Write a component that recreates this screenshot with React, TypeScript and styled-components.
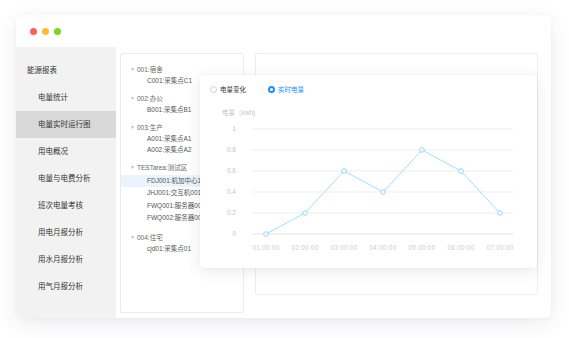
import React, { useState } from 'react';
import styled, { createGlobalStyle } from 'styled-components';

const GlobalStyle = createGlobalStyle`
  html, body {
    margin: 0;
    padding: 0;
    background: #ffffff;
    font-family: "Liberation Sans", "Noto Sans CJK SC", sans-serif;
  }
`;

const Page = styled.div`
  width: 569px;
  height: 338px;
  padding: 15px 0 0 16px;
  box-sizing: border-box;
`;

const Window = styled.div`
  width: 535px;
  height: 303px;
  border-radius: 6px;
  background: #ffffff;
  box-shadow: 0 6px 22px rgba(60, 50, 90, 0.09), 0 1px 4px rgba(0, 0, 0, 0.04);
  display: flex;
  flex-direction: column;
  overflow: hidden;
`;

const TitleBar = styled.div`
  height: 32px;
  display: flex;
  align-items: center;
  gap: 5px;
  padding-left: 14px;
  flex-shrink: 0;
`;

const Dot = styled.span<{ color: string }>`
  width: 7px;
  height: 7px;
  border-radius: 50%;
  background: ${(p) => p.color};
`;

const Body = styled.div`
  flex: 1;
  display: flex;
  min-height: 0;
`;

const Sidebar = styled.div`
  width: 100px;
  background: #f2f2f2;
  padding-top: 10px;
  box-sizing: border-box;
`;

const NavItem = styled.div<{ $active?: boolean; $root?: boolean }>`
  height: 27px;
  line-height: 27px;
  padding-left: ${(p) => (p.$root ? '11px' : '22px')};
  font-size: 7.5px;
  color: #333;
  background: ${(p) => (p.$active ? '#d9d9d9' : 'transparent')};
  white-space: nowrap;
`;

const Main = styled.div`
  position: relative;
  flex: 1;
  display: flex;
  align-items: flex-start;
  gap: 11px;
  padding: 6px 13px 5px 4px;
`;

const TreePanel = styled.div`
  width: 124px;
  height: 260px;
  box-sizing: border-box;
  border: 1px solid #ebebeb;
  border-radius: 2px;
  padding-top: 10px;
  overflow: hidden;
`;

const Group = styled.div`
  margin-bottom: 7px;
`;

const GroupHead = styled.div`
  height: 11px;
  line-height: 11px;
  display: flex;
  align-items: center;
  padding-left: 9px;
  font-size: 6.5px;
  color: #666;
  white-space: nowrap;
`;

const Caret = styled.span`
  font-size: 5px;
  color: #bbb;
  width: 7px;
`;

const Leaf = styled.div<{ $selected?: boolean; $tall?: boolean }>`
  height: ${(p) => (p.$tall ? '12.4px' : '11px')};
  line-height: ${(p) => (p.$tall ? '12.4px' : '11px')};
  padding-left: 26px;
  font-size: 6.5px;
  color: #555;
  white-space: nowrap;
  background: ${(p) => (p.$selected ? '#eaf3fe' : 'transparent')};
`;

const Backdrop = styled.div`
  flex: 1;
  height: 242px;
  box-sizing: border-box;
  border: 1px solid #eeeeee;
  border-radius: 2px;
`;

const ChartCard = styled.div`
  position: absolute;
  left: 84px;
  top: 28px;
  width: 337px;
  height: 193px;
  background: #ffffff;
  border-radius: 4px;
  box-shadow: 0 3px 14px rgba(70, 60, 100, 0.12), 0 0 2px rgba(0, 0, 0, 0.04);
`;

const RadioRow = styled.div`
  display: flex;
  align-items: center;
  height: 28px;
  padding-left: 10px;
  gap: 22px;
`;

const RadioLabel = styled.label<{ $checked?: boolean }>`
  display: flex;
  align-items: center;
  gap: 3px;
  font-size: 6.5px;
  color: ${(p) => (p.$checked ? '#1890ff' : '#333')};
  cursor: pointer;
`;

const RadioCircle = styled.span<{ $checked?: boolean }>`
  width: ${(p) => (p.$checked ? '3px' : '5px')};
  height: ${(p) => (p.$checked ? '3px' : '5px')};
  border-radius: 50%;
  border: ${(p) => (p.$checked ? '2px solid #1890ff' : '0.7px solid #cfcfcf')};
  box-sizing: content-box;
  background: #fff;
`;

const ChartSvg = styled.svg`
  display: block;
  margin-top: 2px;
`;

const hours = ['01:00:00', '02:00:00', '03:00:00', '04:00:00', '05:00:00', '06:00:00', '07:00:00'];
const values = [0, 0.2, 0.6, 0.4, 0.8, 0.6, 0.2];
const ticks = [1, 0.8, 0.6, 0.4, 0.2, 0];

const xAt = (i: number) => 66 + i * 39;
const yAt = (v: number) => 129 - v * 105;

function Chart() {
  const pts = values.map((v, i) => `${xAt(i)},${yAt(v)}`).join(' ');
  return (
    <ChartSvg width="337" height="163" viewBox="0 0 337 163">
      <text x="22" y="10" fontSize="6.5" fill="#c4c4c4" fontFamily='"Liberation Sans", "Noto Sans CJK SC", sans-serif'>
        电量（kwh)
      </text>
      {ticks.map((t) => (
        <g key={t}>
          <line x1="52" x2="313" y1={yAt(t)} y2={yAt(t)} stroke={t === 0 ? '#dcdcdc' : '#e8e8e8'} strokeWidth="0.8" />
          <text x="36" y={yAt(t) + 2.2} fontSize="6.5" fill="#c4c4c4" textAnchor="end" fontFamily='"Liberation Sans", sans-serif'>
            {t}
          </text>
        </g>
      ))}
      {hours.map((h, i) => (
        <text key={h} x={xAt(i)} y="145" fontSize="6.3" fill="#cccccc" textAnchor="middle" letterSpacing="0.3" fontFamily='"Liberation Sans", sans-serif'>
          {h}
        </text>
      ))}
      <polyline points={pts} fill="none" stroke="#8fdcfb" strokeWidth="0.9" />
      {values.map((v, i) => (
        <circle key={i} cx={xAt(i)} cy={yAt(v)} r="2.3" fill="#fff" stroke="#6fd0f8" strokeWidth="0.8" />
      ))}
    </ChartSvg>
  );
}

const navItems = ['电量统计', '电量实时运行图', '用电概况', '电量与电费分析', '班次电量考核', '用电月报分析', '用水月报分析', '用气月报分析'];

const tree = [
  { head: '001:宿舍', leaves: ['C001:采集点C1'] },
  { head: '002:办公', leaves: ['B001:采集点B1'] },
  { head: '003:生产', leaves: ['A001:采集点A1', 'A002:采集点A2'] },
  { head: 'TESTarea:测试区', leaves: ['FDJ001:机加中心1', 'JHJ001:交互机001', 'FWQ001:服务器001', 'FWQ002:服务器002'], tall: true },
  { head: '004:住宅', leaves: ['cjd01:采集点01'] },
];

export default function App() {
  const [mode, setMode] = useState<'change' | 'live'>('live');

  return (
    <Page>
      <GlobalStyle />
      <Window>
        <TitleBar>
          <Dot color="#ff5f57" />
          <Dot color="#ffbd2e" />
          <Dot color="#7ed321" />
        </TitleBar>
        <Body>
          <Sidebar>
            <NavItem $root>能源报表</NavItem>
            {navItems.map((n) => (
              <NavItem key={n} $active={n === '电量实时运行图'}>
                {n}
              </NavItem>
            ))}
          </Sidebar>
          <Main>
            <TreePanel>
              {tree.map((g) => (
                <Group key={g.head}>
                  <GroupHead>
                    <Caret>▼</Caret>
                    {g.head}
                  </GroupHead>
                  {g.leaves.map((l, i) => (
                    <Leaf key={l} $tall={g.tall} $selected={l.startsWith('FDJ001')} style={g.tall && i === 0 ? { marginTop: 2 } : undefined}>
                      {l}
                    </Leaf>
                  ))}
                </Group>
              ))}
            </TreePanel>
            <Backdrop />
            <ChartCard>
              <RadioRow>
                <RadioLabel $checked={mode === 'change'} onClick={() => setMode('change')}>
                  <RadioCircle $checked={mode === 'change'} />
                  电量变化
                </RadioLabel>
                <RadioLabel $checked={mode === 'live'} onClick={() => setMode('live')}>
                  <RadioCircle $checked={mode === 'live'} />
                  实时电量
                </RadioLabel>
              </RadioRow>
              <Chart />
            </ChartCard>
          </Main>
        </Body>
      </Window>
    </Page>
  );
}
